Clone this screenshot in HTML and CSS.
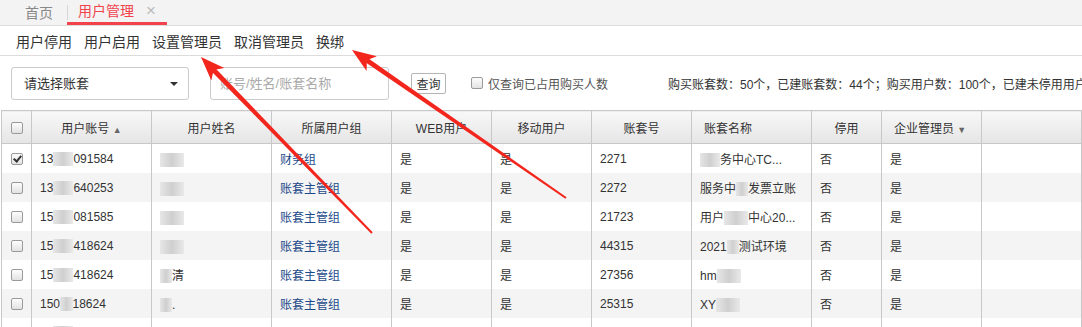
FILE: index.html
```html
<!DOCTYPE html>
<html lang="zh-CN">
<head>
    <meta charset="UTF-8">
    <meta name="viewport" content="width=device-width, initial-scale=1.0">
    <title>用户管理</title>
    <link rel="stylesheet" href="styles.css">
</head>
<body>
    <div class="tabs">
        <span class="tab">首页</span>
        <span class="tab active">用户管理<span class="close">×</span></span>
    </div>

    <div class="toolbar">
        <a class="tool">用户停用</a>
        <a class="tool">用户启用</a>
        <a class="tool">设置管理员</a>
        <a class="tool">取消管理员</a>
        <a class="tool">换绑</a>
    </div>

    <div class="filters">
        <div class="select">请选择账套<span class="caret"></span></div>
        <input class="search" type="text" placeholder="账号/姓名/账套名称">
        <button class="query">查询</button>
        <label class="only"><span class="check"></span>仅查询已占用购买人数</label>
        <div class="summary">购买账套数：50个，已建账套数：44个；购买用户数：100个，已建未停用用户数：86个</div>
    </div>

    <table class="grid">
        <colgroup>
            <col style="width:30px"><col style="width:120px"><col style="width:120px"><col style="width:120px">
            <col style="width:100px"><col style="width:100px"><col style="width:100px"><col style="width:120px">
            <col style="width:70px"><col style="width:100px"><col>
        </colgroup>
        <thead>
            <tr>
                <th><span class="check"></span></th>
                <th>用户账号 <span class="sort">▲</span></th>
                <th>用户姓名</th>
                <th>所属用户组</th>
                <th>WEB用户</th>
                <th>移动用户</th>
                <th>账套号</th>
                <th class="left">账套名称</th>
                <th>停用</th>
                <th class="left">企业管理员 <span class="sort">▼</span></th>
                <th></th>
            </tr>
        </thead>
        <tbody>
            <tr>
                <td class="c"><span class="check on"></span></td>
                <td>13<span class="mask">812</span>091584</td>
                <td><span class="mask">王明</span></td>
                <td class="link">财务组</td>
                <td>是</td><td>是</td><td>2271</td>
                <td><span class="mask">202</span>务中心TC...</td>
                <td>否</td><td>是</td><td></td>
            </tr>
            <tr>
                <td class="c"><span class="check"></span></td>
                <td>13<span class="mask">812</span>640253</td>
                <td><span class="mask">李华</span></td>
                <td class="link">账套主管组</td>
                <td>是</td><td>是</td><td>2272</td>
                <td>服务中<span class="mask">心</span>发票立账</td>
                <td>否</td><td>是</td><td></td>
            </tr>
            <tr>
                <td class="c"><span class="check"></span></td>
                <td>15<span class="mask">812</span>081585</td>
                <td><span class="mask">张伟</span></td>
                <td class="link">账套主管组</td>
                <td>是</td><td>是</td><td>21723</td>
                <td>用户<span class="mask">服务</span>中心20...</td>
                <td>否</td><td>是</td><td></td>
            </tr>
            <tr>
                <td class="c"><span class="check"></span></td>
                <td>15<span class="mask">812</span>418624</td>
                <td><span class="mask">赵六</span></td>
                <td class="link">账套主管组</td>
                <td>是</td><td>是</td><td>44315</td>
                <td>2021<span class="mask">测</span>测试环境</td>
                <td>否</td><td>是</td><td></td>
            </tr>
            <tr>
                <td class="c"><span class="check"></span></td>
                <td>15<span class="mask">812</span>418624</td>
                <td><span class="mask">刘</span>清</td>
                <td class="link">账套主管组</td>
                <td>是</td><td>是</td><td>27356</td>
                <td>hm<span class="mask">账套</span></td>
                <td>否</td><td>是</td><td></td>
            </tr>
            <tr>
                <td class="c"><span class="check"></span></td>
                <td>150<span class="mask">81</span>18624</td>
                <td><span class="mask">陈</span>.</td>
                <td class="link">账套主管组</td>
                <td>是</td><td>是</td><td>25315</td>
                <td>XY<span class="mask">账套</span></td>
                <td>否</td><td>是</td><td></td>
            </tr>
            <tr>
                <td class="c"><span class="check"></span></td>
                <td>13<span class="mask">812</span>52016</td>
                <td><span class="mask">周</span></td>
                <td class="link">账套主管组</td>
                <td>是</td><td>是</td><td>26743</td>
                <td>测试帐账套</td>
                <td>否</td><td>是</td><td></td>
            </tr>
        </tbody>
    </table>

    <!-- annotation arrows drawn over the screenshot -->
    <svg class="marks" width="1082" height="327" viewBox="0 0 1082 327">
        <polygon points="211.8,71.65 215.4,68.15 372.7,232.3 371.3,233.7" fill="#f2261d"/>
        <polygon points="201,57 211.3,80.5 213.6,69.9 224.3,67.9" fill="#f2261d"/>
        <polygon points="365.4,62.26 368.2,58.14 566.6,197.2 565.4,198.8" fill="#f2261d"/>
        <polygon points="352,50 366.6,71.1 366.8,60.2 376.8,56.3" fill="#f2261d"/>
    </svg>
</body>
</html>
```

FILE: styles.css
```css
body {
    margin: 0;
    width: 1082px;
    height: 327px;
    overflow: hidden;
    position: relative;
    background-color: #fff;
    color: #333;
    font-family: "Liberation Sans", Arial, "Noto Sans CJK SC", sans-serif;
    font-size: 12px;
}

.tabs {
    display: flex;
    align-items: flex-end;
    height: 25px;
    padding-left: 10px;
    background-color: #f3f3f3;
    border-bottom: 1px solid #dcdcdc;
}

.tab {
    height: 22px;
    line-height: 20px;
    padding: 0 14px 0 15px;
    font-size: 14px;
    color: #888;
    border-bottom: 3px solid transparent;
    box-sizing: border-box;
}

.tab.active {
    height: 25px;
    line-height: 22px;
    padding: 0 11px 0 11px;
    color: #f2434d;
    border-bottom: 3px solid #f2434d;
    position: relative;
}

.tab.active::before {
    content: "";
    position: absolute;
    left: 0;
    top: 5px;
    height: 15px;
    border-left: 1px solid #d6d6d6;
}

.close {
    margin-left: 12px;
    color: #bbb;
    font-size: 17px;
}

.toolbar {
    display: flex;
    gap: 12px;
    height: 29px;
    align-items: center;
    padding-left: 16px;
    border-bottom: 1px solid #dcdcdc;
}

.tool {
    font-size: 14px;
    color: #333;
    cursor: pointer;
}

.filters {
    display: flex;
    align-items: center;
    height: 54px;
    padding-left: 11px;
    box-sizing: border-box;
    white-space: nowrap;
    overflow: hidden;
}

.filters > * {
    flex-shrink: 0;
}

.select {
    width: 178px;
    height: 33px;
    box-sizing: border-box;
    border: 1px solid #ccc;
    border-radius: 3px;
    padding-left: 12px;
    line-height: 31px;
    font-size: 13px;
    position: relative;
}

.caret {
    position: absolute;
    right: 10px;
    top: 14px;
    border-left: 4px solid transparent;
    border-right: 4px solid transparent;
    border-top: 4px solid #333;
}

.search {
    width: 179px;
    height: 33px;
    box-sizing: border-box;
    margin-left: 21px;
    border: 1px solid #ccc;
    border-radius: 3px;
    padding-left: 9px;
    font-size: 13px;
    font-family: inherit;
}

.search::placeholder {
    color: #aaa;
}

.query {
    margin-left: 22px;
    width: 35px;
    height: 21px;
    padding: 0;
    border: 1px solid #b5b5b5;
    border-radius: 2px;
    background-color: #fff;
    font-family: inherit;
    font-size: 12px;
    color: #333;
}

.only {
    display: flex;
    align-items: center;
    margin-left: 25px;
    color: #555;
}

.only .check {
    margin-right: 5px;
}

.summary {
    margin-left: 60px;
}

.check {
    display: inline-block;
    width: 10px;
    height: 10px;
    border: 1px solid #9a9a9a;
    border-radius: 2px;
    background: linear-gradient(#fdfdfd, #e2e2e2);
    vertical-align: middle;
    position: relative;
}

.check.on::after {
    content: "";
    position: absolute;
    left: 3px;
    top: 0px;
    width: 3px;
    height: 6px;
    border: solid #333;
    border-width: 0 2px 2px 0;
    transform: rotate(40deg);
}

.grid {
    margin-left: 1px;
    width: 1081px;
    border-collapse: collapse;
    table-layout: fixed;
}

.grid th {
    height: 32px;
    padding: 0;
    font-weight: normal;
    color: #333;
    background: linear-gradient(#f8f8f8, #e5e5e5);
    border: 1px solid #c8c8c8;
    text-align: center;
}

.grid th.left {
    text-align: left;
    padding-left: 12px;
}

.sort {
    font-size: 9px;
    color: #666;
}

.grid td {
    height: 29px;
    padding: 0 0 0 8px;
    border-left: 1px solid #c8c8c8;
    border-right: 1px solid #c8c8c8;
    white-space: nowrap;
    overflow: hidden;
}

.grid td.c {
    text-align: center;
    padding: 0;
}

.grid tbody tr:nth-child(even) td {
    background-color: #f4f4f4;
}

.grid td.link {
    color: #1d4a8a;
}

.mask {
    color: transparent;
    background: linear-gradient(90deg, #e6e6e6, #cfcfcf 50%, #e9e9e9);
}

.marks {
    position: absolute;
    left: 0;
    top: 0;
    pointer-events: none;
}
```
